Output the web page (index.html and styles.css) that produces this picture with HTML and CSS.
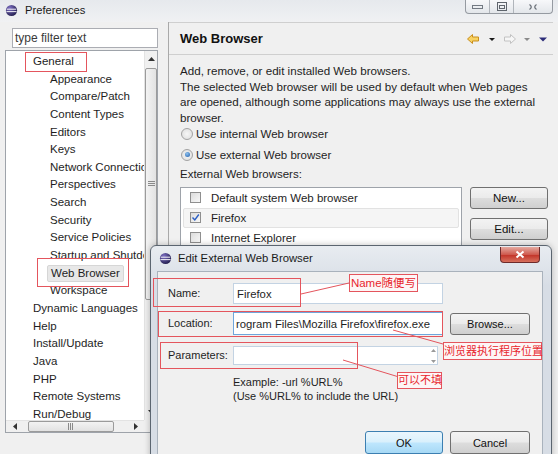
FILE: index.html
```html
<!DOCTYPE html>
<html>
<head>
<meta charset="utf-8">
<link rel="stylesheet" href="styles.css">
</head>
<body>
<div class="win">
  <div class="titlebar">
    <svg class="app-icon" viewBox="0 0 14 14"><defs><radialGradient id="eg" cx="0.35" cy="0.3" r="0.8"><stop offset="0" stop-color="#7d6fc4"/><stop offset="1" stop-color="#1c1846"/></radialGradient></defs><circle cx="7" cy="7" r="6" fill="url(#eg)"/><path d="M2 5.6h10M1.6 8.2h10.8" stroke="#fff" stroke-width="1"/></svg>
    <span class="title">Preferences</span>
    <div class="winbtns">
      <span class="wb"><svg width="11" height="6"><rect x="0.5" y="1.5" width="10" height="3" fill="none" stroke="#737a83"/></svg></span>
      <span class="wb"><svg width="10" height="9"><rect x="0.5" y="0.5" width="9" height="8" fill="none" stroke="#5f656d"/><rect x="2.5" y="3.5" width="5" height="3" fill="none" stroke="#5f656d"/></svg></span>
      <span class="wb wb-close"><svg width="10" height="8"><path d="M1.5 1.5 Q5 4 1.5 6.5 M8.5 1.5 Q5 4 8.5 6.5" stroke="#6a7078" stroke-width="1.3" fill="none"/></svg></span>
    </div>
  </div>
  <div class="main">
    <div class="left">
      <div class="filter">type filter text</div>
      <div class="tree">
        <div class="rows">
          <div class="row top">General</div>
          <div class="row child">Appearance</div>
          <div class="row child">Compare/Patch</div>
          <div class="row child">Content Types</div>
          <div class="row child">Editors</div>
          <div class="row child">Keys</div>
          <div class="row child">Network Connections</div>
          <div class="row child">Perspectives</div>
          <div class="row child">Search</div>
          <div class="row child">Security</div>
          <div class="row child">Service Policies</div>
          <div class="row child">Startup and Shutdown</div>
          <div class="row child"><span class="sel">Web Browser</span></div>
          <div class="row child">Workspace</div>
          <div class="row top">Dynamic Languages</div>
          <div class="row top">Help</div>
          <div class="row top">Install/Update</div>
          <div class="row top">Java</div>
          <div class="row top">PHP</div>
          <div class="row top">Remote Systems</div>
          <div class="row top">Run/Debug</div>
        </div>
        <div class="vs">
          <div class="sb-arrow"><svg width="7" height="4"><path d="M0 4L3.5 0L7 4z" fill="#333"/></svg></div>
          <div class="vthumb"><svg width="7" height="6"><path d="M0 .5h7M0 2.5h7M0 4.5h7" stroke="#8a8a8a"/></svg></div>
          <div class="sb-fill"></div>
          <div class="sb-arrow"><svg width="7" height="4"><path d="M0 0L3.5 4L7 0z" fill="#333"/></svg></div>
        </div>
        <div class="hs">
          <div class="sb-arrow h"><svg width="4" height="7"><path d="M4 0L0 3.5L4 7z" fill="#333"/></svg></div>
          <div class="hthumb"><svg width="6" height="7"><path d="M.5 0v7M2.5 0v7M4.5 0v7" stroke="#8a8a8a"/></svg></div>
          <div class="sb-fill"></div>
          <div class="sb-arrow h"><svg width="4" height="7"><path d="M0 0L4 3.5L0 7z" fill="#333"/></svg></div>
        </div>
        <div class="corner"></div>
      </div>
    </div>
    <div class="right">
      <div class="head">
        <h1 class="head-title">Web Browser</h1>
        <svg class="nav" width="86" height="12" viewBox="0 0 86 12">
          <path d="M2.5 6L7.5 1.5V4H13.5V8H7.5V10.5Z" fill="#f8d262" stroke="#c98f1d" stroke-linejoin="round"/>
          <path d="M24 5H30L27 8Z" fill="#1a1a1a"/>
          <path d="M50.5 6L45.5 1.5V4H39.5V8H45.5V10.5Z" fill="#f6f6f6" stroke="#c2c2c2" stroke-linejoin="round"/>
          <path d="M59 5H65L62 8Z" fill="#8a8a8a"/>
          <path d="M74 4.5H82L78 8.5Z" fill="#2c2c78"/>
        </svg>
      </div>
      <div class="page">
        <p class="desc">Add, remove, or edit installed Web browsers.<br>The selected Web browser will be used by default when Web pages<br>are opened, although some applications may always use the external<br>browser.</p>
        <div class="radio-row first"><span class="radio"></span>Use internal Web browser</div>
        <div class="radio-row"><span class="radio on"></span>Use external Web browser</div>
        <div class="plabel">External Web browsers:</div>
        <div class="browsers">
          <div class="list">
            <div class="item"><span class="check"></span>Default system Web browser</div>
            <div class="item selected"><span class="check"><svg width="9" height="9"><path d="M1.5 4.5L3.8 7L7.8 1.5" stroke="#2a5ec4" stroke-width="1.4" fill="none"/></svg></span>Firefox</div>
            <div class="item"><span class="check"></span>Internet Explorer</div>
          </div>
          <div class="side-btns">
            <div class="btn">New...</div>
            <div class="btn">Edit...</div>
          </div>
        </div>
      </div>
    </div>
  </div>
</div>

<div class="dlg">
  <div class="dlg-title">
    <svg class="app-icon dlg-icon" viewBox="0 0 14 14"><circle cx="7" cy="7" r="6" fill="url(#eg)"/><path d="M2 5.6h10M1.6 8.2h10.8" stroke="#fff" stroke-width="1"/></svg>
    <span class="dlg-caption">Edit External Web Browser</span>
    <div class="dlg-close"><svg width="10" height="9"><path d="M1.5 1.5L8.5 7.5M8.5 1.5L1.5 7.5" stroke="#fff" stroke-width="2"/></svg></div>
  </div>
  <div class="dlg-body">
    <div class="frow r-name"><span class="flabel">Name:</span><div class="field f-name">Firefox</div></div>
    <div class="frow r-loc"><span class="flabel">Location:</span><div class="field f-loc">rogram Files\Mozilla Firefox\firefox.exe</div><div class="btn">Browse...</div></div>
    <div class="frow r-par"><span class="flabel">Parameters:</span><div class="field f-par"><span class="spin"><svg width="5" height="16"><path d="M0 4L2.5 1L5 4Z M0 12L2.5 15L5 12Z" fill="#9a9a9a"/></svg></span></div></div>
    <div class="example">Example: -url %URL%<br>(Use %URL% to include the URL)</div>
    <div class="frow r-btns"><div class="btn default ok">OK</div><div class="btn">Cancel</div></div>
  </div>
</div>

<div class="mark m-general"></div>
<div class="mark m-web"></div>
<div class="mark m-name"></div>
<div class="mark m-loc"></div>
<div class="mark m-par"></div>
<svg class="lines" width="558" height="454">
  <path d="M301 294L349 283M393 330L443 344M343 360L399 377" stroke="#e4555d" stroke-width="1" fill="none"/>
</svg>
<div class="note n-name">Name随便写</div>
<div class="note n-loc">浏览器执行程序位置</div>
<div class="note n-par">可以不填</div>
</body>
</html>
```

FILE: styles.css
```css
* { box-sizing: border-box; margin: 0; padding: 0; }
html, body { width: 558px; height: 454px; overflow: hidden; }
body {
  position: relative;
  font-family: "Liberation Sans", Arial, sans-serif;
  font-size: 11.5px;
  color: #1e1e1e;
  background: #f0f0f0;
}
.win { width: 558px; height: 454px; display: flex; flex-direction: column; }

/* title bar */
.titlebar {
  height: 22px; flex: none;
  display: flex; align-items: flex-start;
  background: linear-gradient(#e6e9ed, #f0f1f3);
}
.app-icon { width: 13px; height: 13px; margin: 4px 0 0 5px; }
.title { margin: 3px 0 0 7px; font-size: 11.2px; line-height: 15px; color: #1a1a1a; }
.winbtns {
  margin-left: auto; margin-right: 5px;
  display: flex; height: 14px;
  border: 1px solid #959aa1; border-top: 0;
  border-radius: 0 0 4px 4px;
  background: linear-gradient(#f7f8fa, #e3e6ea);
}
.wb { width: 24px; border-right: 1px solid #b0b5bb; display: flex; align-items: center; justify-content: center; }
.wb-close { width: 38px; border-right: 0; }

/* main */
.main { flex: 1; display: flex; min-height: 0; }
.left { width: 168px; flex: none; padding-left: 5px; display: flex; flex-direction: column; }
.filter {
  margin: 6px 0 0 7px; width: 146px; height: 20px;
  border: 1px solid #abadb3; background: #fff;
  padding-left: 2px; line-height: 18px; color: #3a3a3a; font-size: 12px;
}
.tree {
  margin-top: 2px; width: 153px; height: 383px;
  border: 1px solid #9ea3aa; background: #fff;
  display: grid; grid-template-columns: minmax(0, 1fr) 13px; grid-template-rows: minmax(0, 1fr) 12px;
}
.rows { overflow: hidden; padding-top: 2px; min-height: 0; }
.row { height: 17.65px; line-height: 17.65px; white-space: nowrap; }
.row.top { padding-left: 27px; }
.row.child { padding-left: 44px; }
.sel {
  display: inline-block; height: 17px; line-height: 15px;
  margin-left: -3px;
  padding: 0 3px; background: #e8e8e8; border: 1px solid #d6d6d6; border-radius: 2px;
}
.vs { display: flex; flex-direction: column; background: #f0f0f0; border-left: 1px solid #e3e3e3; min-height: 0; }
.sb-arrow { height: 16px; flex: none; display: flex; align-items: center; justify-content: center; }
.sb-arrow.h { width: 17px; height: auto; }
.sb-fill { flex: 1; }
.vthumb {
  height: 232px; flex: none; margin: 1px 0 0 0;
  border: 1px solid #9b9b9b; border-radius: 2px;
  background: linear-gradient(90deg, #f3f3f3, #e2e2e2);
  display: flex; align-items: center; justify-content: center;
}
.hs { display: flex; background: #f0f0f0; border-top: 1px solid #e3e3e3; }
.hthumb {
  width: 86px; flex: none; margin-left: 5px;
  border: 1px solid #9b9b9b; border-radius: 2px;
  background: linear-gradient(#f3f3f3, #e2e2e2);
  display: flex; align-items: center; justify-content: center;
}
.corner { background: #f0f0f0; }

/* right page */
.right { flex: 1; min-width: 0; margin-right: 5px; border-left: 1px solid #a9a9a9; display: flex; flex-direction: column; }
.head {
  height: 33px; flex: none;
  border-top: 1px solid #cfcfcf; border-bottom: 1px solid #cfcfcf;
  display: flex; align-items: center; padding-left: 11px;
}
.head-title { font-size: 13px; font-weight: bold; color: #111; }
.nav { margin-left: auto; margin-right: 2px; }
.page { padding: 8px 5px 0 11px; }
.desc { line-height: 15.7px; font-size: 11.6px; white-space: nowrap; }
.radio-row { height: 16px; display: flex; align-items: center; gap: 3px; }
.radio-row.first { margin-top: 0; }
.radio-row + .radio-row { margin-top: 5px; }
.radio {
  width: 12px; height: 12px; margin-left: 1px; border-radius: 50%;
  border: 1px solid #a3a3a3; background: radial-gradient(#f6f6f6, #dcdcdc);
  position: relative;
}
.radio.on::after {
  content: ""; position: absolute; left: 2.5px; top: 2.5px; width: 5px; height: 5px; border-radius: 50%;
  background: radial-gradient(circle at 40% 35%, #8fc3f0, #1d5aa8);
}
.plabel { margin-top: 3px; height: 16px; line-height: 16px; }
.browsers { margin-top: 5px; display: flex; gap: 8px; }
.list { width: 282px; height: 90px; border: 1px solid #9ea3aa; background: #fff; padding: 0 2px; }
.item { height: 20px; display: flex; align-items: center; padding-left: 7px; gap: 10px; }
.item.selected { background: #f5f5f5; border: 1px solid #e2e2e2; border-radius: 2px; padding-left: 6px; }
.check {
  width: 11px; height: 11px; border: 1px solid #8f8f8f;
  background: linear-gradient(135deg, #dcdcdc, #f8f8f8);
  display: flex; align-items: center; justify-content: center;
}
.side-btns { display: flex; flex-direction: column; gap: 9px; }
.btn {
  width: 78px; height: 22px;
  border: 1px solid #707070; border-radius: 3px;
  background: linear-gradient(#f3f3f3 0%, #ebebeb 48%, #dddddd 52%, #cfcfcf 100%);
  display: flex; align-items: center; justify-content: center;
  color: #111;
}

/* dialog */
.dlg {
  position: absolute; left: 150px; top: 245px; width: 402px; height: 215px;
  border: 1px solid #5b6570; border-radius: 6px 6px 0 0;
  background: linear-gradient(#e8ecf1, #d7dde5 40px, #d7dde5);
  padding: 0 8px 0 6px;
  box-shadow: 0 0 6px rgba(0,0,0,.25);
  display: flex; flex-direction: column;
}
.dlg-title { height: 25px; flex: none; display: flex; align-items: flex-start; }
.dlg-icon { margin: 6px 0 0 2px; }
.dlg-caption { margin: 5px 0 0 6px; font-size: 11.3px; line-height: 15px; color: #1a1a1a; }
.dlg-close {
  margin: 1px 3px 0 auto; width: 40px; height: 16px;
  border: 1px solid #6e2a2a; border-radius: 0 0 4px 4px; border-top: 0;
  background: linear-gradient(#e5a9a0, #cf5a4e 50%, #c3362a 55%, #d7705d);
  display: flex; align-items: center; justify-content: center;
}
.dlg-body { flex: 1; background: #f0f0f0; border: 1px solid #a9b2bc; padding: 0 0 0 10px; font-size: 11px; }
.frow { display: grid; grid-template-columns: 65px 210px 87px; align-items: center; }
.frow .btn { justify-self: end; width: 80px; }
.flabel { padding-bottom: 2px; }
.field {
  height: 100%; background: #fff; border: 1px solid #c3d3e3;
  padding-left: 3px; display: flex; align-items: center; white-space: nowrap; overflow: hidden;
  font-size: 11.3px;
}
.r-name { height: 21px; margin-top: 11px; }
.r-loc { height: 23px; margin-top: 8px; }
.f-loc { border-color: #6fa6dc; padding-left: 2px; }
.r-loc .btn { height: 22px; }
.r-par { height: 19px; margin-top: 11px; }
.f-par { width: 205px; justify-content: flex-end; padding-right: 1px; }
.spin { display: flex; }
.example { margin: 10px 0 0 65px; line-height: 14px; font-size: 11px; }
.r-btns { height: 23px; margin-top: 28px; }
.r-btns .btn { height: 23px; }
.r-btns .ok { grid-column: 2; justify-self: end; width: 78px; }
.btn.default {
  border-color: #3c7fb1;
  background: linear-gradient(#eaf6fd 0%, #d9f0fc 48%, #bee6fd 52%, #a7d9f5 100%);
}

/* annotations */
.mark { position: absolute; border: 1px solid #e4555d; }
.m-general { left: 25px; top: 52px; width: 62px; height: 20px; }
.m-web { left: 37px; top: 258px; width: 92px; height: 29px; }
.m-name { left: 153px; top: 278px; width: 148px; height: 29px; }
.m-loc { left: 158px; top: 311px; width: 285px; height: 26px; }
.m-par { left: 160px; top: 342px; width: 198px; height: 27px; }
.lines { position: absolute; left: 0; top: 0; }
.note {
  position: absolute; border: 1px solid #e4555d; background: #fdf6f6;
  color: #e8262e; font-family: "Liberation Sans", "Noto Sans CJK SC", sans-serif;
  font-size: 11px; line-height: 16px; text-align: center; white-space: nowrap;
}
.n-name { left: 349px; top: 274px; width: 69px; height: 18px; font-size: 11.5px; }
.n-loc { left: 443px; top: 342px; width: 99px; height: 18px; }
.n-par { left: 397px; top: 372px; width: 45px; height: 17px; line-height: 15px; }
```
